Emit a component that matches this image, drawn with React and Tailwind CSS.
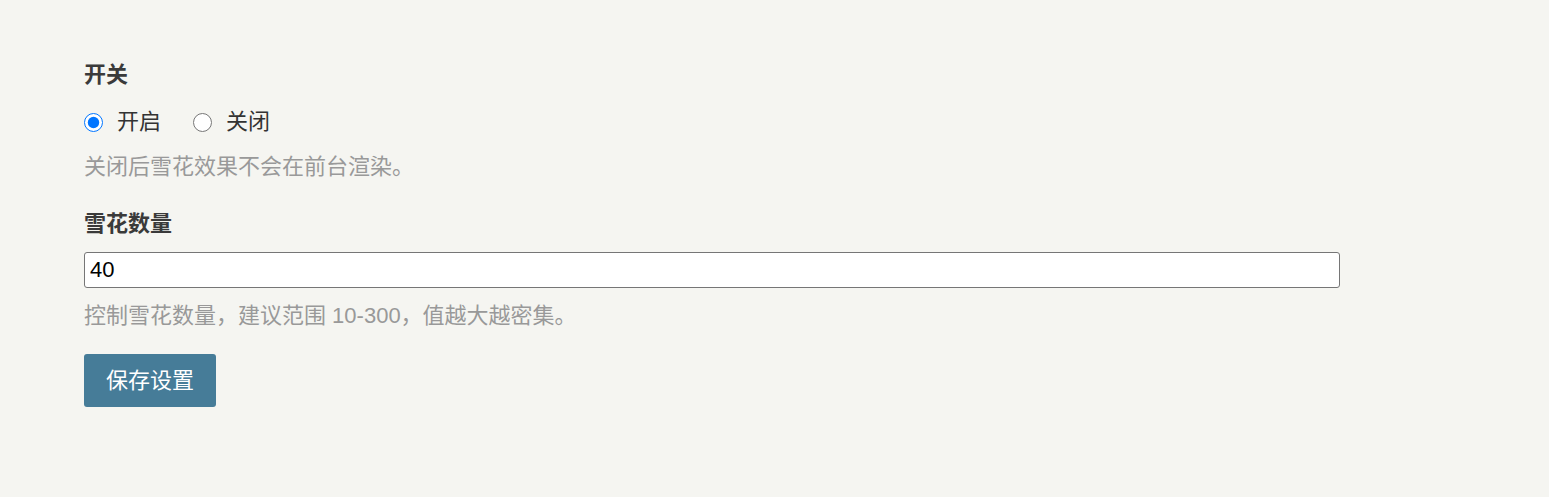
import React from 'react';

const font = { fontFamily: '"Liberation Sans", "Noto Sans CJK SC", sans-serif' };

export default function App() {
  return (
    <div className="min-h-[497px] bg-[#f5f5f1] pl-[84px] pt-[60px] text-[22px] text-[#333]" style={font}>
      <div className="font-bold leading-[30px] text-[#3a3a3a]">开关</div>

      <div className="mt-[17px] flex h-[30px] items-center">
        <label className="flex items-center">
          <input type="radio" name="snow" defaultChecked className="m-0 h-[19px] w-[19px] accent-[#0075ff]" />
          <span className="ml-[14px] leading-[30px]">开启</span>
        </label>
        <label className="ml-[32px] flex items-center">
          <input type="radio" name="snow" className="m-0 h-[19px] w-[19px]" />
          <span className="ml-[14px] leading-[30px]">关闭</span>
        </label>
      </div>

      <p className="mt-[15px] leading-[30px] text-[#999]">关闭后雪花效果不会在前台渲染。</p>

      <div className="mt-[27px] font-bold leading-[30px] text-[#3a3a3a]">雪花数量</div>

      <input
        type="number"
        defaultValue="40"
        className="mt-[13px] block h-[36px] w-[1256px] rounded-[3px] border border-[#767676] bg-white px-[5px] text-[22px] text-black outline-none"
      />

      <p className="mt-[13px] leading-[30px] text-[#999]">控制雪花数量，建议范围 10-300，值越大越密集。</p>

      <button className="mt-[23px] block h-[53px] w-[132px] rounded-[3px] bg-[#467c98] text-center text-[22px] text-white">
        保存设置
      </button>
    </div>
  );
}
